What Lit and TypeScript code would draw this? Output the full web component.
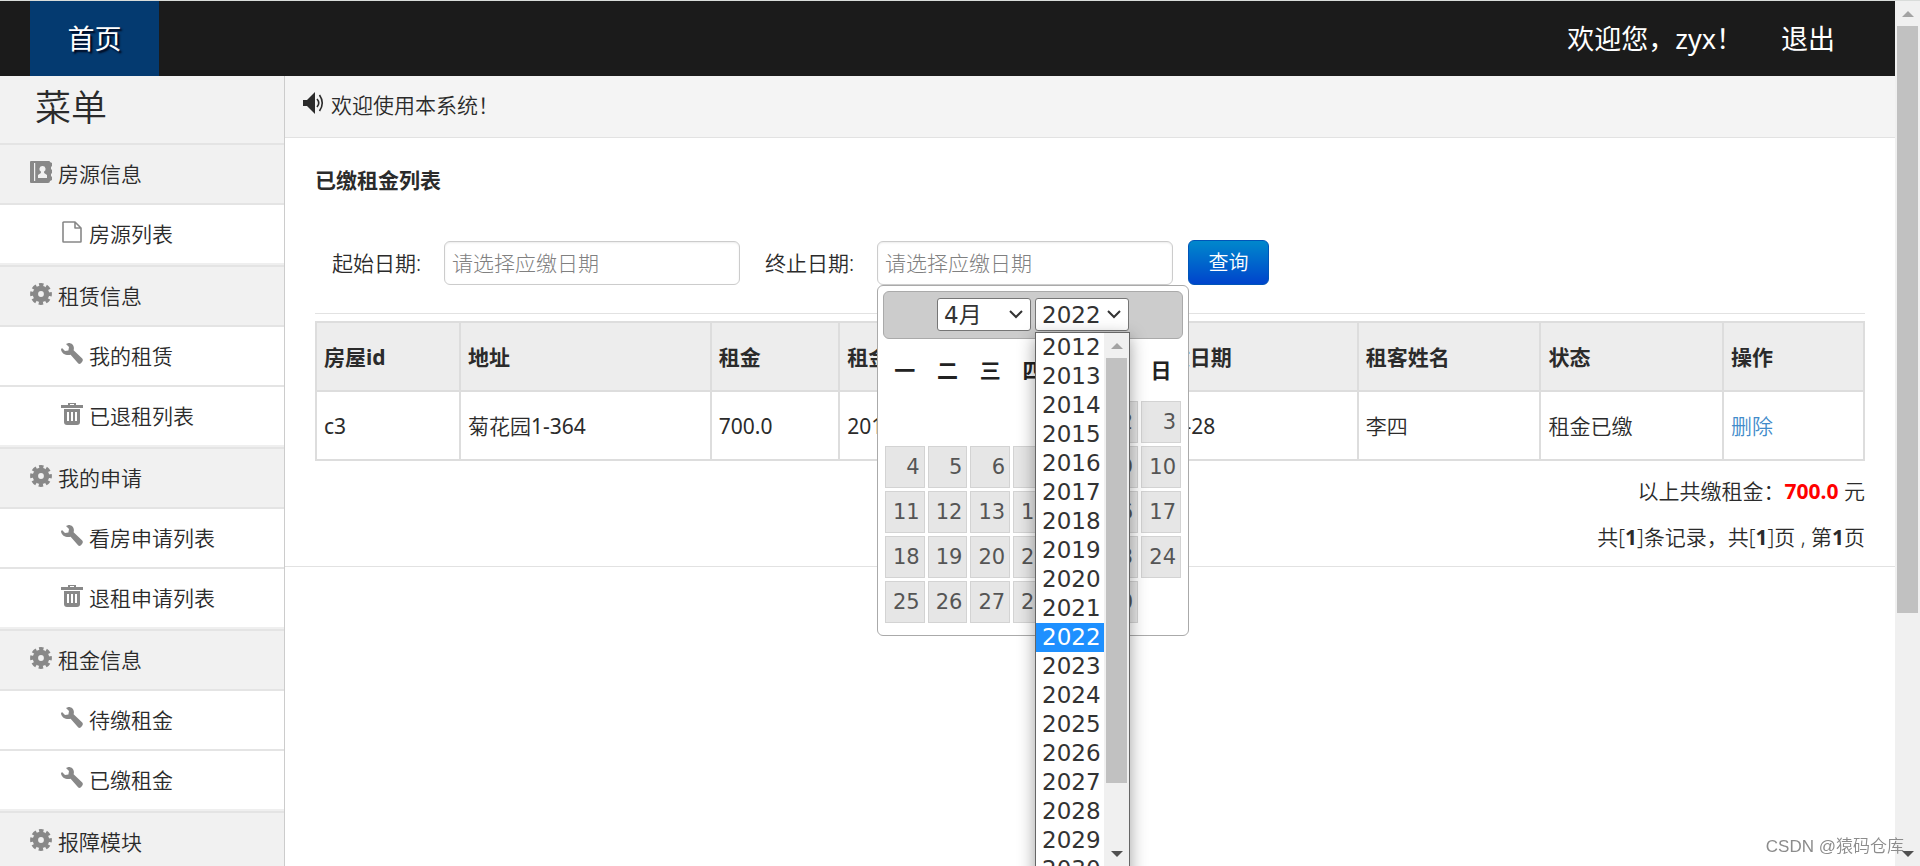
import { LitElement, html, css, svg, nothing } from "lit";
import { customElement, property, state } from "lit/decorators.js";
import { classMap } from "lit/directives/class-map.js";

const glyphs = {
  cog: svg`<circle cx="11" cy="11" r="5.6" fill="none" stroke="currentColor" stroke-width="5.4"/>
    <circle cx="11" cy="11" r="9.2" fill="none" stroke="currentColor" stroke-width="3.4" stroke-dasharray="4.4 2.825" stroke-dashoffset="2.2"/>`,
  wrench: svg`<path fill="currentColor" d="M5 1 7.5 0C11.7 0 13.7 3.4 12.6 7.2L21 15.2C22.1 16.3 22.1 17.6 21 19 19.9 20.6 18.5 21.5 17.3 20.6L9.6 11.8C5.4 12.8.5 11 0 6.2L1 5 4 8 7.4 7.4 8 4Z"/>`,
  trash: svg`<path fill="currentColor" fill-rule="evenodd" d="M7 0h8v2h7v3H0V2h7ZM9 1h4v1H9ZM3 6h16v13q0 3-3 3H6q-3 0-3-3ZM6 9v9h2V9ZM10 9v9h2V9ZM14 9v9h2V9Z"/>`,
  file: svg`<path fill="none" stroke="currentColor" stroke-width="1.6" stroke-linejoin="round" d="M3 1h11l6 6v13.500q0 .5-.5 .5H2.500q-.5 0-.5-.5V1.500ZM14 1v6h6"/>`,
  contacts: svg`<path fill="currentColor" fill-rule="evenodd" d="M1 0h18q1 0 1 1l2 1v3l-1 1v2l1 1v3l-1 1v2l1 1v3l-2 1q0 2-2 2H1q-1 0-1-1V1q0-1 1-1ZM4 2v18h1.200V2ZM12.500 5a3 3 0 0 0-1.600 5.600V12L8 14v3h9v-3l-2.900-2v-1.400A3 3 0 0 0 12.500 5Z"/>`,
  volume: svg`<path fill="currentColor" d="M0 8h4l8-8v22l-8-8H0Z"/><path fill="none" stroke="currentColor" stroke-width="1.6" d="M14 7q3.500 4 0 8M16.500 3q5.500 8 0 16"/>`,
};
type GlyphName = keyof typeof glyphs;

@customElement("ui-glyph")
class UiGlyph extends LitElement {
  @property() name: GlyphName = "cog";
  static styles = css`
    :host { display: inline-flex; flex: none; width: 22px; height: 22px; }
    svg { width: 100%; height: 100%; }
  `;
  render() {
    return html`<svg viewBox="0 0 22 22" aria-hidden="true">${glyphs[this.name]}</svg>`;
  }
}

@customElement("scroll-track")
class ScrollTrack extends LitElement {
  static styles = css`
    :host { display: flex; flex-direction: column; align-items: stretch; width: 25px; padding: 0 2px; box-sizing: border-box; background: #f0f0f0; }
    .arrow { height: 25px; display: flex; align-items: center; justify-content: center; }
    .rail { flex: 1; }
    .thumb { height: 100%; background: #c1c1c1; }
    .up { fill: #a3a3a3; }
    .down { fill: #505050; }
    svg { width: 12px; height: 6px; }
  `;
  @property({ type: Number }) share = 50;
  render() {
    return html`
      <div class="arrow"><svg class="up" viewBox="0 0 12 6"><path d="M6 0l6 6H0Z" /></svg></div>
      <div class="rail"><div class="thumb" style="height:${this.share}%"></div></div>
      <div class="arrow"><svg class="down" viewBox="0 0 12 6"><path d="M0 0h12L6 6Z" /></svg></div>
    `;
  }
}

@customElement("date-panel")
class DatePanel extends LitElement {
  @state() private month = 4;
  @state() private year = 2022;
  @state() private listOpen = true;

  static styles = css`
    :host { display: block; box-sizing: border-box; width: 312px; height: 351px; padding: 5px; background: #fff; border: 1px solid #aaa; border-radius: 6px; font-family: "DejaVu Sans", "Noto Sans CJK SC", sans-serif; font-weight: 400; }
    .head { display: flex; justify-content: center; align-items: center; gap: 4px; height: 48px; box-sizing: border-box; background: #ccc; border: 1px solid #aaa; border-radius: 6px; }
    .pick { position: relative; width: 94px; height: 33px; }
    select { appearance: none; box-sizing: border-box; width: 100%; height: 100%; margin: 0; padding: 0 0 0 6px; border: 1px solid #767676; border-radius: 3px; background: #fff; color: #333; font: 400 23px/30px "DejaVu Sans", "Noto Sans CJK SC", sans-serif; }
    .chevron { position: absolute; right: 8px; top: 12px; width: 14px; height: 9px; pointer-events: none; fill: none; stroke: #333; stroke-width: 2; }
    .options { position: absolute; z-index: 2; top: 34px; left: 0; width: 95px; height: 550px; box-sizing: border-box; display: flex; border: 1px solid #666; background: #fff; box-shadow: 0 5px 16px rgba(0, 0, 0, 0.38); overflow: hidden; }
    .years { flex: 1; overflow: hidden; }
    .year { height: 29px; padding-left: 6px; font-size: 23px; line-height: 29px; color: #333; }
    .year.on { background: #1e90ff; color: #fff; }
    .bar { height: 533px; }
    table { width: calc(100% + 2px); margin: 5px -1px 0; border-collapse: separate; border-spacing: 3px; table-layout: fixed; }
    th { height: 48px; padding: 0 0 3px; font-size: 21px; color: #222; }
    td { height: 42px; padding: 0; }
    .day { display: block; box-sizing: border-box; width: 100%; height: 42px; margin: 0; padding: 0 4px 0 0; border: 1px solid #d3d3d3; background: #e6e6e6; color: #555; font: 21px/38px "DejaVu Sans", sans-serif; text-align: right; }
  `;

  private weeks() {
    const lead = (new Date(this.year, this.month - 1, 1).getDay() + 6) % 7;
    const count = new Date(this.year, this.month, 0).getDate();
    const rows: number[][] = [];
    for (let start = 1 - lead; start <= count; start += 7) {
      rows.push(Array.from({ length: 7 }, (_, i) => (start + i > 0 && start + i <= count ? start + i : 0)));
    }
    return rows;
  }

  private chevron() {
    return html`<svg class="chevron" viewBox="0 0 14 9"><path d="M1 1l6 6 6-6" /></svg>`;
  }

  render() {
    const years = Array.from({ length: 19 }, (_, i) => 2012 + i);
    return html`
      <div class="head">
        <div class="pick">
          <select aria-label="月份" @change=${(e: Event) => (this.month = Number((e.target as HTMLSelectElement).value))}>
            ${Array.from({ length: 12 }, (_, i) => html`<option value=${i + 1} ?selected=${i + 1 === this.month}>${i + 1}月</option>`)}
          </select>
          ${this.chevron()}
        </div>
        <div class="pick">
          <select
            aria-label="年份"
            @mousedown=${(e: Event) => {
              e.preventDefault();
              this.listOpen = !this.listOpen;
            }}
          >
            ${years.map((y) => html`<option value=${y} ?selected=${y === this.year}>${y}</option>`)}
          </select>
          ${this.chevron()}
          ${this.listOpen
            ? html`<div class="options">
                <div class="years" role="listbox" aria-label="年份">
                  ${years.map(
                    (y) => html`<div
                      role="option"
                      aria-selected=${y === this.year}
                      class=${classMap({ year: true, on: y === this.year })}
                      @click=${() => {
                        this.year = y;
                        this.listOpen = false;
                      }}
                    >${y}</div>`
                  )}
                </div>
                <scroll-track class="bar" share="88"></scroll-track>
              </div>`
            : nothing}
        </div>
      </div>
      <table>
        <thead>
          <tr>${["一", "二", "三", "四", "五", "六", "日"].map((d) => html`<th scope="col">${d}</th>`)}</tr>
        </thead>
        <tbody>
          ${this.weeks().map((w) => html`<tr>${w.map((d) => html`<td>${d ? html`<button class="day">${d}</button>` : nothing}</td>`)}</tr>`)}
        </tbody>
      </table>
    `;
  }
}

interface MenuGroup {
  icon: GlyphName;
  label: string;
  items: [GlyphName, string][];
}

const menu: MenuGroup[] = [
  { icon: "contacts", label: "房源信息", items: [["file", "房源列表"]] },
  { icon: "cog", label: "租赁信息", items: [["wrench", "我的租赁"], ["trash", "已退租列表"]] },
  { icon: "cog", label: "我的申请", items: [["wrench", "看房申请列表"], ["trash", "退租申请列表"]] },
  { icon: "cog", label: "租金信息", items: [["wrench", "待缴租金"], ["wrench", "已缴租金"]] },
  { icon: "cog", label: "报障模块", items: [] },
];

const columns = ["房屋id", "地址", "租金", "租金应缴日期", "租金实缴日期", "租客姓名", "状态", "操作"];
const records = [["c3", "菊花园1-364", "700.0", "2017-12-28", "2017-12-28", "李四", "租金已缴"]];

// Latin letters and digits are set one step heavier than the Chinese characters beside them.
const mixed = (text: string) =>
  text.split(/([\w.-]+)/).map((part) => (/^[\w.-]+$/.test(part) ? html`<span class="latin">${part}</span>` : part));

@customElement("app-root")
class AppRoot extends LitElement {
  static styles = css`
    :host { display: grid; grid-template-columns: minmax(0, 1fr) auto; height: 100vh; box-sizing: border-box; border-top: 1px solid #d9dcda; overflow: hidden; background: #fff; color: #2b2b2b; font: 350 21px/30px "Noto Sans", "Noto Sans CJK SC", sans-serif; }
    a { color: inherit; text-decoration: none; }
    .page { display: flex; flex-direction: column; min-height: 0; }
    .nav { flex: none; display: flex; align-items: stretch; height: 75px; padding: 0 60px 0 30px; background: #1b1b1b; color: #fff; font-size: 27px; font-weight: 400; }
    .nav a, .nav span { display: flex; align-items: center; }
    .home { width: 129px; justify-content: center; background: #043a70; text-shadow: 2px 2px 2px #001; }
    .hello { margin-left: auto; margin-right: 38px; }
    .body { flex: 1; display: flex; min-height: 0; }
    .side { flex: none; width: 284px; border-right: 1px solid #ccc; background: #fff; overflow: hidden; }
    .side h2 { margin: 0; height: 67px; box-sizing: border-box; padding: 9px 0 0 35px; background: #f2f2f2; font-size: 36px; line-height: 46px; font-weight: 350; }
    .group { border-bottom: 2px solid #efefef; }
    .side ul { margin: 0; padding: 0; list-style: none; }
    .entry { display: flex; align-items: center; gap: 6px; height: 58px; border-top: 2px solid #e4e4e4; padding-left: 61px; }
    .entry ui-glyph { color: #888; margin-bottom: 4px; }
    .entry.top { padding-left: 30px; background: #f1f1f1; }
    .main { flex: 1; min-width: 0; }
    .notice { display: flex; align-items: center; gap: 6px; height: 57px; padding: 0 18px 4px; background: #f4f4f4; border-bottom: 1px solid #e2e2e2; }
    .notice ui-glyph { margin-bottom: 4px; }
    .panel { padding: 27px 30px 6px; border-bottom: 1px solid #e2e2e2; }
    h1 { margin: 0; font-size: 21px; line-height: 30px; font-weight: 700; }
    .filters { display: flex; align-items: center; height: 45px; padding: 45px 0 28px 17px; border-bottom: 1px solid #e2e2e2; }
    .filters label { width: 112px; }
    .field { position: relative; width: 296px; margin-right: 25px; }
    .field.last { margin-right: 15px; }
    .field input { display: block; box-sizing: border-box; width: 100%; height: 44px; padding: 0 7px; border: 1px solid #ccc; border-radius: 6px; background: #fff; box-shadow: inset 0 1px 2px rgba(0, 0, 0, 0.08); color: #555; font: 300 21px/30px "Noto Sans", "Noto Sans CJK SC", sans-serif; }
    .field input::placeholder { color: #808080; opacity: 1; }
    date-panel { position: absolute; z-index: 1; top: 100%; left: 0; }
    .query { width: 81px; height: 45px; padding: 0; border: 1px solid #0055b8; border-radius: 6px; background: linear-gradient(#0088cc, #0044cc); color: #fff; font: 350 20px/30px "Noto Sans", "Noto Sans CJK SC", sans-serif; }
    .records { width: 100%; margin-top: 7px; table-layout: fixed; border-collapse: collapse; border: 2px solid #ddd; }
    .records th, .records td { height: 67px; padding: 0 7px; border: 2px solid #ddd; text-align: left; box-sizing: border-box; }
    .records thead { background: #ededed; }
    .records tr { height: 69px; }
    .records th { font-weight: 700; }
    .latin { font-weight: 400; }
    .records a { color: #428bca; }
    .totals { margin-top: 7px; text-align: right; }
    .totals p { margin: 0; padding: 8px 0; }
    .totals strong { color: #f00; }
    b, strong { font-weight: 700; }
    .mark { position: fixed; right: 16px; bottom: 6px; color: #8c8c8c; font: 350 17px/26px "Liberation Sans", "Noto Sans CJK SC", sans-serif; }
  `;

  private widths = [9.3, 16.2, 8.3, 16.7, 16.8, 11.8, 11.8, 9.1];

  render() {
    return html`
      <div class="page">
        <nav class="nav">
          <a class="home" href="#">首页</a>
          <span class="hello">欢迎您，zyx！</span>
          <a href="#">退出</a>
        </nav>
        <div class="body">
          <aside class="side">
            <h2>菜单</h2>
            ${menu.map(
              (g) => html`<div class="group">
                <a class="entry top" href="#"><ui-glyph name=${g.icon}></ui-glyph>${g.label}</a>
                <ul>
                  ${g.items.map(([icon, label]) => html`<li><a class="entry" href="#"><ui-glyph name=${icon}></ui-glyph>${label}</a></li>`)}
                </ul>
              </div>`
            )}
          </aside>
          <main class="main">
            <div class="notice"><ui-glyph name="volume"></ui-glyph>欢迎使用本系统！</div>
            <section class="panel">
              <h1>已缴租金列表</h1>
              <form class="filters" @submit=${(e: Event) => e.preventDefault()}>
                <label for="from">起始日期:</label>
                <div class="field"><input id="from" type="text" placeholder="请选择应缴日期" /></div>
                <label for="to">终止日期:</label>
                <div class="field last">
                  <input id="to" type="text" placeholder="请选择应缴日期" />
                  <date-panel></date-panel>
                </div>
                <button class="query">查询</button>
              </form>
              <table class="records">
                <colgroup>${this.widths.map((w) => html`<col style="width:${w}%" />`)}</colgroup>
                <thead><tr>${columns.map((c) => html`<th scope="col">${c}</th>`)}</tr></thead>
                <tbody>
                  ${records.map(
                    (r) => html`<tr>
                      ${r.map((v) => html`<td>${mixed(v)}</td>`)}
                      <td><a href="#">删除</a></td>
                    </tr>`
                  )}
                </tbody>
              </table>
              <div class="totals">
                <p>以上共缴租金：<strong>700.0</strong> 元</p>
                <p>共[<b>1</b>]条记录，共[<b>1</b>]页 , 第<b>1</b>页</p>
              </div>
            </section>
          </main>
        </div>
      </div>
      <scroll-track share="72"></scroll-track>
      <div class="mark">CSDN @猿码仓库</div>
    `;
  }
}
